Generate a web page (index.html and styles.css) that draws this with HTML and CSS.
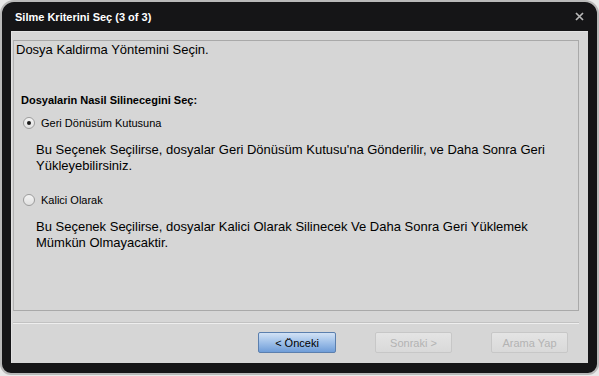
FILE: index.html
```html
<!DOCTYPE html>
<html lang="tr">
<head>
  <meta charset="UTF-8">
  <meta name="viewport" content="width=device-width, initial-scale=1.0">
  <title>Silme Kriterini Seç</title>
  <link rel="stylesheet" href="styles.css">
</head>
<body>
  <div class="window">
    <div class="titlebar">
      <span class="title">Silme Kriterini Seç (3 of 3)</span>
      <span class="close">
        <svg width="9" height="9" viewBox="0 0 9 9">
          <path d="M1 1 L8 8 M8 1 L1 8" stroke="#b8b8b8" stroke-width="1.7" fill="none"/>
        </svg>
      </span>
    </div>
    <div class="content">
      <div class="panel">
        <div class="intro">Dosya Kaldirma Yöntemini Seçin.</div>
        <div class="heading">Dosyalarin Nasil Silinecegini Seç:</div>

        <label class="option first">
          <span class="radio checked"></span>
          <span class="label">Geri Dönüsüm Kutusuna</span>
        </label>
        <p class="desc">Bu Seçenek Seçilirse, dosyalar Geri Dönüsüm Kutusu'na Gönderilir, ve Daha Sonra Geri Yükleyebilirsiniz.</p>

        <label class="option">
          <span class="radio"></span>
          <span class="label">Kalici Olarak</span>
        </label>
        <p class="desc">Bu Seçenek Seçilirse, dosyalar Kalici Olarak Silinecek Ve Daha Sonra Geri Yüklemek Mümkün Olmayacaktir.</p>
      </div>
      <div class="footer">
        <button class="btn primary">&lt; Önceki</button>
        <button class="btn" disabled>Sonraki &gt;</button>
        <button class="btn" disabled>Arama Yap</button>
      </div>
    </div>
  </div>
</body>
</html>
```

FILE: styles.css
```css
body {
  margin: 0;
  background-color: #e9e9e9;
  font-family: "Liberation Sans", Arial, sans-serif;
}

.window {
  box-sizing: border-box;
  width: 599px;
  height: 375px;
  border: 2px solid #b9b9b9;
  border-radius: 14px 14px 11px 11px;
  background-color: #151517;
  padding: 0 9px 10px 9px;
  display: flex;
  flex-direction: column;
}

.titlebar {
  height: 29px;
  display: flex;
  align-items: center;
  justify-content: space-between;
  padding: 0 4px 0 4px;
}

.title {
  color: #fff;
  font-size: 11px;
  font-weight: bold;
  margin-top: 1px;
}

.close {
  display: flex;
  margin-right: 0;
}

.content {
  flex: 1;
  background-color: #d6d6d6;
  border-top: 1px solid #e2e2e2;
  border-left: 1px solid #e2e2e2;
  padding: 8px 9px 0 1px;
  display: flex;
  flex-direction: column;
}

.panel {
  height: 268px;
  border: 1px solid #a9a9a9;
  border-left-color: #b3b3b3;
  padding: 1px 0 0 2px;
  color: #000;
}

.intro {
  font-size: 13px;
  line-height: 16px;
}

.heading {
  font-size: 11px;
  font-weight: bold;
  line-height: 14px;
  margin: 35px 0 0 5px;
}

.option {
  display: flex;
  align-items: center;
  gap: 6px;
  height: 14px;
  margin: 19px 0 0 7px;
  font-size: 11px;
}

.option.first {
  margin-top: 9px;
}

.radio {
  box-sizing: border-box;
  width: 12px;
  height: 12px;
  border-radius: 50%;
  border: 1px solid #9c9c9c;
  background: linear-gradient(#f4f4f4, #e0e0e0);
  display: flex;
  align-items: center;
  justify-content: center;
}

.radio.checked::after {
  content: "";
  width: 4px;
  height: 4px;
  border-radius: 50%;
  background-color: #1a1a1a;
}

.desc {
  width: 530px;
  margin: 12px 0 0 20px;
  font-size: 13px;
  line-height: 16px;
}

.footer {
  margin-top: 12px;
  border-top: 1px solid #eeeeee;
  box-shadow: 0 -1px 0 #c2c2c2;
  display: flex;
  justify-content: flex-end;
  gap: 39px;
  padding: 8px 11px 0 0;
}

.btn {
  width: 77px;
  height: 21px;
  font-family: "Liberation Sans", Arial, sans-serif;
  font-size: 11px;
  color: #b3b3b3;
  border: 1px solid #c7c7c7;
  border-radius: 2px;
  background: linear-gradient(#e4e4e4, #d9d9d9);
  padding: 0;
}

.btn.primary {
  width: 78px;
  color: #000;
  border-color: #5b7fae;
  background: linear-gradient(#d2e2f5, #9fc0e9 50%, #6f9dd8);
}
```
